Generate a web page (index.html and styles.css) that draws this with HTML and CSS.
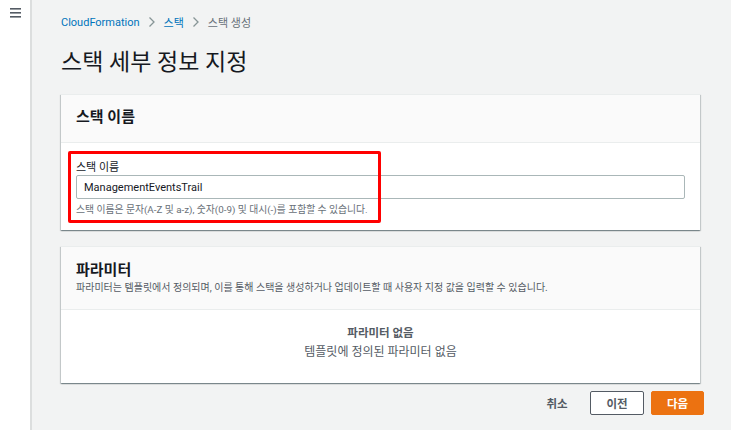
FILE: index.html
```html
<!DOCTYPE html>
<html lang="ko">
<head>
<meta charset="utf-8">
<link rel="stylesheet" href="styles.css">
</head>
<body>
<div class="app">
  <aside class="sidebar">
    <svg class="menu-icon" width="12" height="10" viewBox="0 0 12 10">
      <rect x="0" y="0" width="11" height="1.6" fill="#545b64"/>
      <rect x="0" y="4" width="11" height="1.6" fill="#545b64"/>
      <rect x="0" y="8" width="11" height="1.6" fill="#545b64"/>
    </svg>
  </aside>
  <main class="main">
    <nav class="breadcrumb">
      <a class="crumb-link">CloudFormation</a>
      <svg class="chev" width="8" height="12" viewBox="0 0 8 12"><path d="M1.5 1.5 L6 6 L1.5 10.5" fill="none" stroke="#879596" stroke-width="1.3"/></svg>
      <a class="crumb-link">스택</a>
      <svg class="chev" width="8" height="12" viewBox="0 0 8 12"><path d="M1.5 1.5 L6 6 L1.5 10.5" fill="none" stroke="#879596" stroke-width="1.3"/></svg>
      <span class="crumb-current">스택 생성</span>
    </nav>
    <h1 class="page-title">스택 세부 정보 지정</h1>

    <section class="card card-name">
      <header class="card-header">
        <h2 class="card-title">스택 이름</h2>
      </header>
      <div class="card-body">
        <div class="field">
          <label class="field-label">스택 이름</label>
          <div class="input">ManagementEventsTrail</div>
          <div class="hint">스택 이름은 문자(A-Z 및 a-z), 숫자(0-9) 및 대시(-)를 포함할 수 있습니다.</div>
          <div class="highlight"></div>
        </div>
      </div>
    </section>

    <section class="card card-params">
      <header class="card-header params-header">
        <h2 class="card-title">파라미터</h2>
        <p class="card-desc">파라미터는 템플릿에서 정의되며, 이를 통해 스택을 생성하거나 업데이트할 때 사용자 지정 값을 입력할 수 있습니다.</p>
      </header>
      <div class="empty">
        <div class="empty-title">파라미터 없음</div>
        <div class="empty-text">템플릿에 정의된 파라미터 없음</div>
      </div>
    </section>

    <div class="actions">
      <button class="btn btn-link">취소</button>
      <button class="btn btn-normal">이전</button>
      <button class="btn btn-primary">다음</button>
    </div>
  </main>
</div>
</body>
</html>
```
FILE: styles.css
```css
* { box-sizing: border-box; }
html, body {
  margin: 0;
  padding: 0;
  height: 100%;
}
body {
  font-family: Roboto, "Noto Sans CJK KR", sans-serif;
  color: #16191f;
  background: #f2f3f3;
  overflow: hidden;
}
.app {
  display: flex;
  height: 430px;
}
.sidebar {
  width: 32px;
  flex: none;
  background: #fff;
  border-right: 2px solid #dcdede;
  padding: 8px 0 0 10px;
}
.menu-icon { display: block; }
.main {
  flex: 1;
  padding: 13px 31px 0 29px;
}
.breadcrumb {
  display: flex;
  align-items: center;
  gap: 8px;
  font-size: 11px;
  height: 18px;
}
.crumb-link { color: #0073bb; }
.crumb-current { color: #687078; }
.page-title {
  font-size: 23px;
  font-weight: 400;
  margin: 14px 0 0 0;
  line-height: 35px;
}
.card {
  background: #fff;
  box-shadow: 0 1px 1px 0 rgba(0,28,36,.3), 1px 1px 1px 0 rgba(0,28,36,.15), -1px 1px 1px 0 rgba(0,28,36,.15);
  border-top: 1px solid #eaeded;
}
.card-name { margin-top: 14px; }
.card-params { margin-top: 16px; }
.card-header {
  background: #fafafa;
  border-bottom: 1px solid #eaeded;
  padding: 11px 15px 0;
  height: 48px;
}
.params-header { height: 63px; padding-top: 12px; }
.card-title {
  margin: 0;
  font-size: 15px;
  font-weight: 700;
  line-height: 22px;
}
.card-desc {
  margin: 0;
  font-size: 10px;
  line-height: 14px;
  color: #545b64;
}
.card-body {
  padding: 14px 15px 13px;
}
.field { position: relative; }
.field-label {
  display: block;
  font-size: 11px;
  line-height: 22px;
  height: 18px;
}
.input {
  height: 24px;
  border: 1px solid #aab7b8;
  border-radius: 2px;
  padding: 0 7px;
  font-size: 11px;
  line-height: 24px;
  color: #16191f;
}
.hint {
  font-size: 9.8px;
  line-height: 14px;
  margin-top: 4px;
  color: #687078;
}
.highlight {
  position: absolute;
  left: -8px;
  top: -6px;
  width: 313px;
  height: 72px;
  border: 3px solid #ff0000;
  border-radius: 2px;
}
.empty {
  height: 73px;
  text-align: center;
  padding-top: 14px;
}
.empty-title {
  font-size: 11.5px;
  font-weight: 700;
  color: #545b64;
  line-height: 18px;
}
.empty-text {
  font-size: 12px;
  color: #545b64;
  line-height: 20px;
}
.actions {
  display: flex;
  justify-content: flex-end;
  align-items: center;
  margin-top: 8px;
  margin-right: -4px;
}
.btn {
  font-family: inherit;
  font-size: 11.5px;
  font-weight: 700;
  height: 24px;
  border-radius: 2px;
  cursor: pointer;
  padding: 0;
}
.btn-link {
  background: none;
  border: none;
  color: #545b64;
  width: 40px;
  margin-right: 13px;
}
.btn-normal {
  width: 54px;
  background: #fff;
  border: 1px solid #545b64;
  color: #545b64;
  margin-right: 7px;
}
.btn-primary {
  width: 53px;
  background: #ec7211;
  border: 1px solid #ec7211;
  color: #fff;
}
```
